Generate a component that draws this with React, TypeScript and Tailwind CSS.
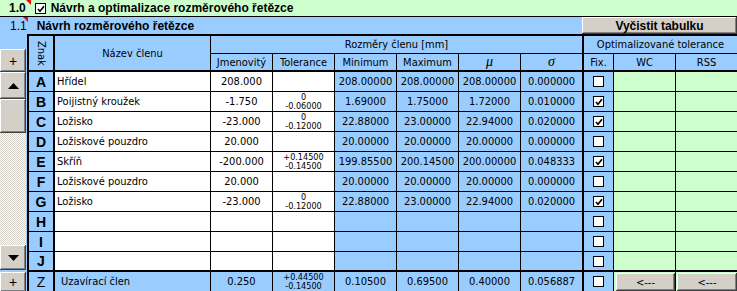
import React from "react";

type Row = {
  k: string;
  name: string;
  jm: string;
  tol?: [string, string];
  min: string;
  max: string;
  mu: string;
  sg: string;
  fix: boolean;
};

const rows: Row[] = [
  { k: "A", name: "Hřídel", jm: "208.000", min: "208.00000", max: "208.00000", mu: "208.00000", sg: "0.000000", fix: false },
  { k: "B", name: "Poijistný kroužek", jm: "-1.750", tol: ["0", "-0.06000"], min: "1.69000", max: "1.75000", mu: "1.72000", sg: "0.010000", fix: true },
  { k: "C", name: "Ložisko", jm: "-23.000", tol: ["0", "-0.12000"], min: "22.88000", max: "23.00000", mu: "22.94000", sg: "0.020000", fix: true },
  { k: "D", name: "Ložiskové pouzdro", jm: "20.000", min: "20.00000", max: "20.00000", mu: "20.00000", sg: "0.000000", fix: false },
  { k: "E", name: "Skříň", jm: "-200.000", tol: ["+0.14500", "-0.14500"], min: "199.85500", max: "200.14500", mu: "200.00000", sg: "0.048333", fix: true },
  { k: "F", name: "Ložiskové pouzdro", jm: "20.000", min: "20.00000", max: "20.00000", mu: "20.00000", sg: "0.000000", fix: false },
  { k: "G", name: "Ložisko", jm: "-23.000", tol: ["0", "-0.12000"], min: "22.88000", max: "23.00000", mu: "22.94000", sg: "0.020000", fix: true },
  { k: "H", name: "", jm: "", min: "", max: "", mu: "", sg: "", fix: false },
  { k: "I", name: "", jm: "", min: "", max: "", mu: "", sg: "", fix: false },
  { k: "J", name: "", jm: "", min: "", max: "", mu: "", sg: "", fix: false },
];

function Check({ checked, className = "" }: { checked?: boolean; className?: string }) {
  return (
    <span className={`relative inline-block w-[11px] h-[11px] shrink-0 bg-white border border-black ${className}`}>
      {checked && (
        <svg className="absolute left-[1px] top-[1px]" width="8" height="8" viewBox="0 0 8 8">
          <path d="M1 4 L3 6.2 L7 1.2" fill="none" stroke="black" strokeWidth="1.7" />
        </svg>
      )}
    </span>
  );
}

const btn3d =
  "bg-[#d4d0c8] shadow-[inset_-1px_-1px_#404040,inset_1px_1px_#ffffff,inset_-2px_-2px_#808080]";

const titleFont = "font-['Liberation_Sans',Arial,sans-serif]";

function Tol({ t }: { t?: [string, string] }) {
  if (!t) return null;
  return (
    <div className="flex flex-col items-center text-[9px] leading-[9px]">
      <span>{t[0]}</span>
      <span>{t[1]}</span>
    </div>
  );
}

export default function App() {
  return (
    <div className="w-[737px] h-[291px] overflow-hidden bg-[#99ccff] font-['DejaVu_Sans_Condensed','Liberation_Sans',Arial,sans-serif] text-[11px] text-black leading-none">
      {/* Row 1 */}
      <div className={`relative flex items-center h-[17px] bg-[#ccffcc] border-b border-black ${titleFont}`}>
        <span className="ml-[9px] font-bold text-[12px]">1.0</span>
        <span className="absolute left-[26px] top-0 w-0 h-0 border-l-[5px] border-l-transparent border-t-[5px] border-t-[#ff0000]" />
        <Check className="ml-[9px]" checked />
        <span className="ml-[5px] font-bold text-[12px]">Návrh a optimalizace rozměrového řetězce</span>
      </div>
      {/* Row 2 */}
      <div className={`relative flex items-center h-[17px] bg-[#99ccff] ${titleFont}`}>
        <span className="ml-[10px] text-[12px]">1.1</span>
        <span className="absolute left-[23px] top-0 w-0 h-0 border-l-[5px] border-l-transparent border-t-[5px] border-t-[#ff0000]" />
        <span className="ml-[10px] font-bold text-[12px]">Návrh rozměrového řetězce</span>
        <div className={`ml-auto w-[155px] h-[17px] flex items-center justify-center font-bold text-[12px] ${btn3d}`}>
          Vyčistit tabulku
        </div>
      </div>
      {/* Main */}
      <div className="flex">
        {/* Left strip */}
        <div className="w-[27px] flex flex-col">
          <div className="h-[15px]" />
          <div className={`w-[26px] h-[23px] flex items-center justify-center text-[14px] ${titleFont} ${btn3d}`}>+</div>
          <div className={`w-[26px] h-[27px] flex items-center justify-center ${btn3d}`}>
            <svg width="11" height="6" viewBox="0 0 11 6">
              <polygon points="0,6 5.5,0 11,6" fill="black" />
            </svg>
          </div>
          <div className={`w-[26px] h-[34px] ${btn3d}`} />
          <div className="w-[26px] h-[112px] bg-[repeating-conic-gradient(#d4d0c8_0_25%,#ffffff_0_50%)] bg-[length:2px_2px]" />
          <div className={`w-[26px] h-[25px] flex items-center justify-center ${btn3d}`}>
            <svg width="11" height="6" viewBox="0 0 11 6">
              <polygon points="0,0 5.5,6 11,0" fill="black" />
            </svg>
          </div>
          <div className="h-[2px]" />
          <div className={`w-[26px] h-[20px] flex items-center justify-center text-[14px] ${titleFont} ${btn3d}`}>+</div>
        </div>
        {/* Table */}
        <div className="grid grid-cols-[26px_156px_62px_62px_62px_62px_62px_63px_30px_62px_61px] grid-rows-[18px_18px_repeat(9,20px)_20px_19px] border-l-2 border-t-2 border-black">
          {/* header row 1 */}
          <div className="row-span-2 border-r-2 border-b-2 border-black flex justify-center items-center">
            <span className="[writing-mode:vertical-rl]">Znak</span>
          </div>
          <div className="row-span-2 border-r border-b-2 border-black flex items-center justify-center">Název členu</div>
          <div className="col-span-6 border-r-2 border-b border-black flex items-center justify-center">Rozměry členu [mm]</div>
          <div className="col-span-3 border-b border-black flex items-center justify-center">Optimalizované tolerance</div>
          {/* header row 2 */}
          <div className="border-r border-b-2 border-black flex items-center justify-center">Jmenovitý</div>
          <div className="border-r border-b-2 border-black flex items-center justify-center">Tolerance</div>
          <div className="border-r border-b-2 border-black flex items-center justify-center">Minimum</div>
          <div className="border-r border-b-2 border-black flex items-center justify-center">Maximum</div>
          <div className="border-r border-b-2 border-black flex items-center justify-center font-['Liberation_Serif',serif] italic text-[14px]">μ</div>
          <div className="border-r-2 border-b-2 border-black flex items-center justify-center font-['Liberation_Serif',serif] italic text-[14px]">σ</div>
          <div className="border-r border-b-2 border-black flex items-center justify-center">Fix.</div>
          <div className="border-r border-b-2 border-black flex items-center justify-center">WC</div>
          <div className="border-b-2 border-black flex items-center justify-center">RSS</div>
          {/* data rows */}
          {rows.map((r, i) => {
            const last = i === rows.length - 1;
            const bb = last ? "border-b-2" : "border-b";
            return (
              <React.Fragment key={r.k}>
                <div className={`${bb} border-r-2 border-black flex items-center justify-center font-bold text-[14px] ${titleFont}`}>{r.k}</div>
                <div className={`${bb} border-r border-black bg-white flex items-center pl-[2px]`}>{r.name}</div>
                <div className={`${bb} border-r border-black bg-white flex items-center justify-center`}>{r.jm}</div>
                <div className={`${bb} border-r border-black bg-white flex items-center justify-center`}>
                  <Tol t={r.tol} />
                </div>
                <div className={`${bb} border-r border-black flex items-center justify-center`}>{r.min}</div>
                <div className={`${bb} border-r border-black flex items-center justify-center`}>{r.max}</div>
                <div className={`${bb} border-r border-black flex items-center justify-center`}>{r.mu}</div>
                <div className={`${bb} border-r-2 border-black flex items-center justify-center`}>{r.sg}</div>
                <div className={`${bb} border-r border-black flex items-center justify-center`}>
                  <Check checked={r.fix} />
                </div>
                <div className={`${bb} border-r border-black bg-[#ccffcc]`} />
                <div className={`${bb} border-black bg-[#ccffcc]`} />
              </React.Fragment>
            );
          })}
          {/* Z row */}
          <div className={`border-r-2 border-black flex items-center justify-center text-[14px] ${titleFont}`}>Z</div>
          <div className="border-r border-black flex items-center pl-[6px]">Uzavírací člen</div>
          <div className="border-r border-black flex items-center justify-center">0.250</div>
          <div className="border-r border-black flex items-center justify-center">
            <Tol t={["+0.44500", "-0.14500"]} />
          </div>
          <div className="border-r border-black flex items-center justify-center">0.10500</div>
          <div className="border-r border-black flex items-center justify-center">0.69500</div>
          <div className="border-r border-black flex items-center justify-center">0.40000</div>
          <div className="border-r-2 border-black flex items-center justify-center">0.056887</div>
          <div className="border-r border-black flex items-center justify-center">
            <Check />
          </div>
          <div className="border-r border-black pl-[2px] pt-[1px] bg-[#ccffcc]">
            <div className={`h-full flex items-center justify-center ${btn3d}`}>&lt;---</div>
          </div>
          <div className="pl-[1px] pt-[1px] bg-[#ccffcc]">
            <div className={`h-full flex items-center justify-center ${btn3d}`}>&lt;---</div>
          </div>
        </div>
      </div>
    </div>
  );
}
